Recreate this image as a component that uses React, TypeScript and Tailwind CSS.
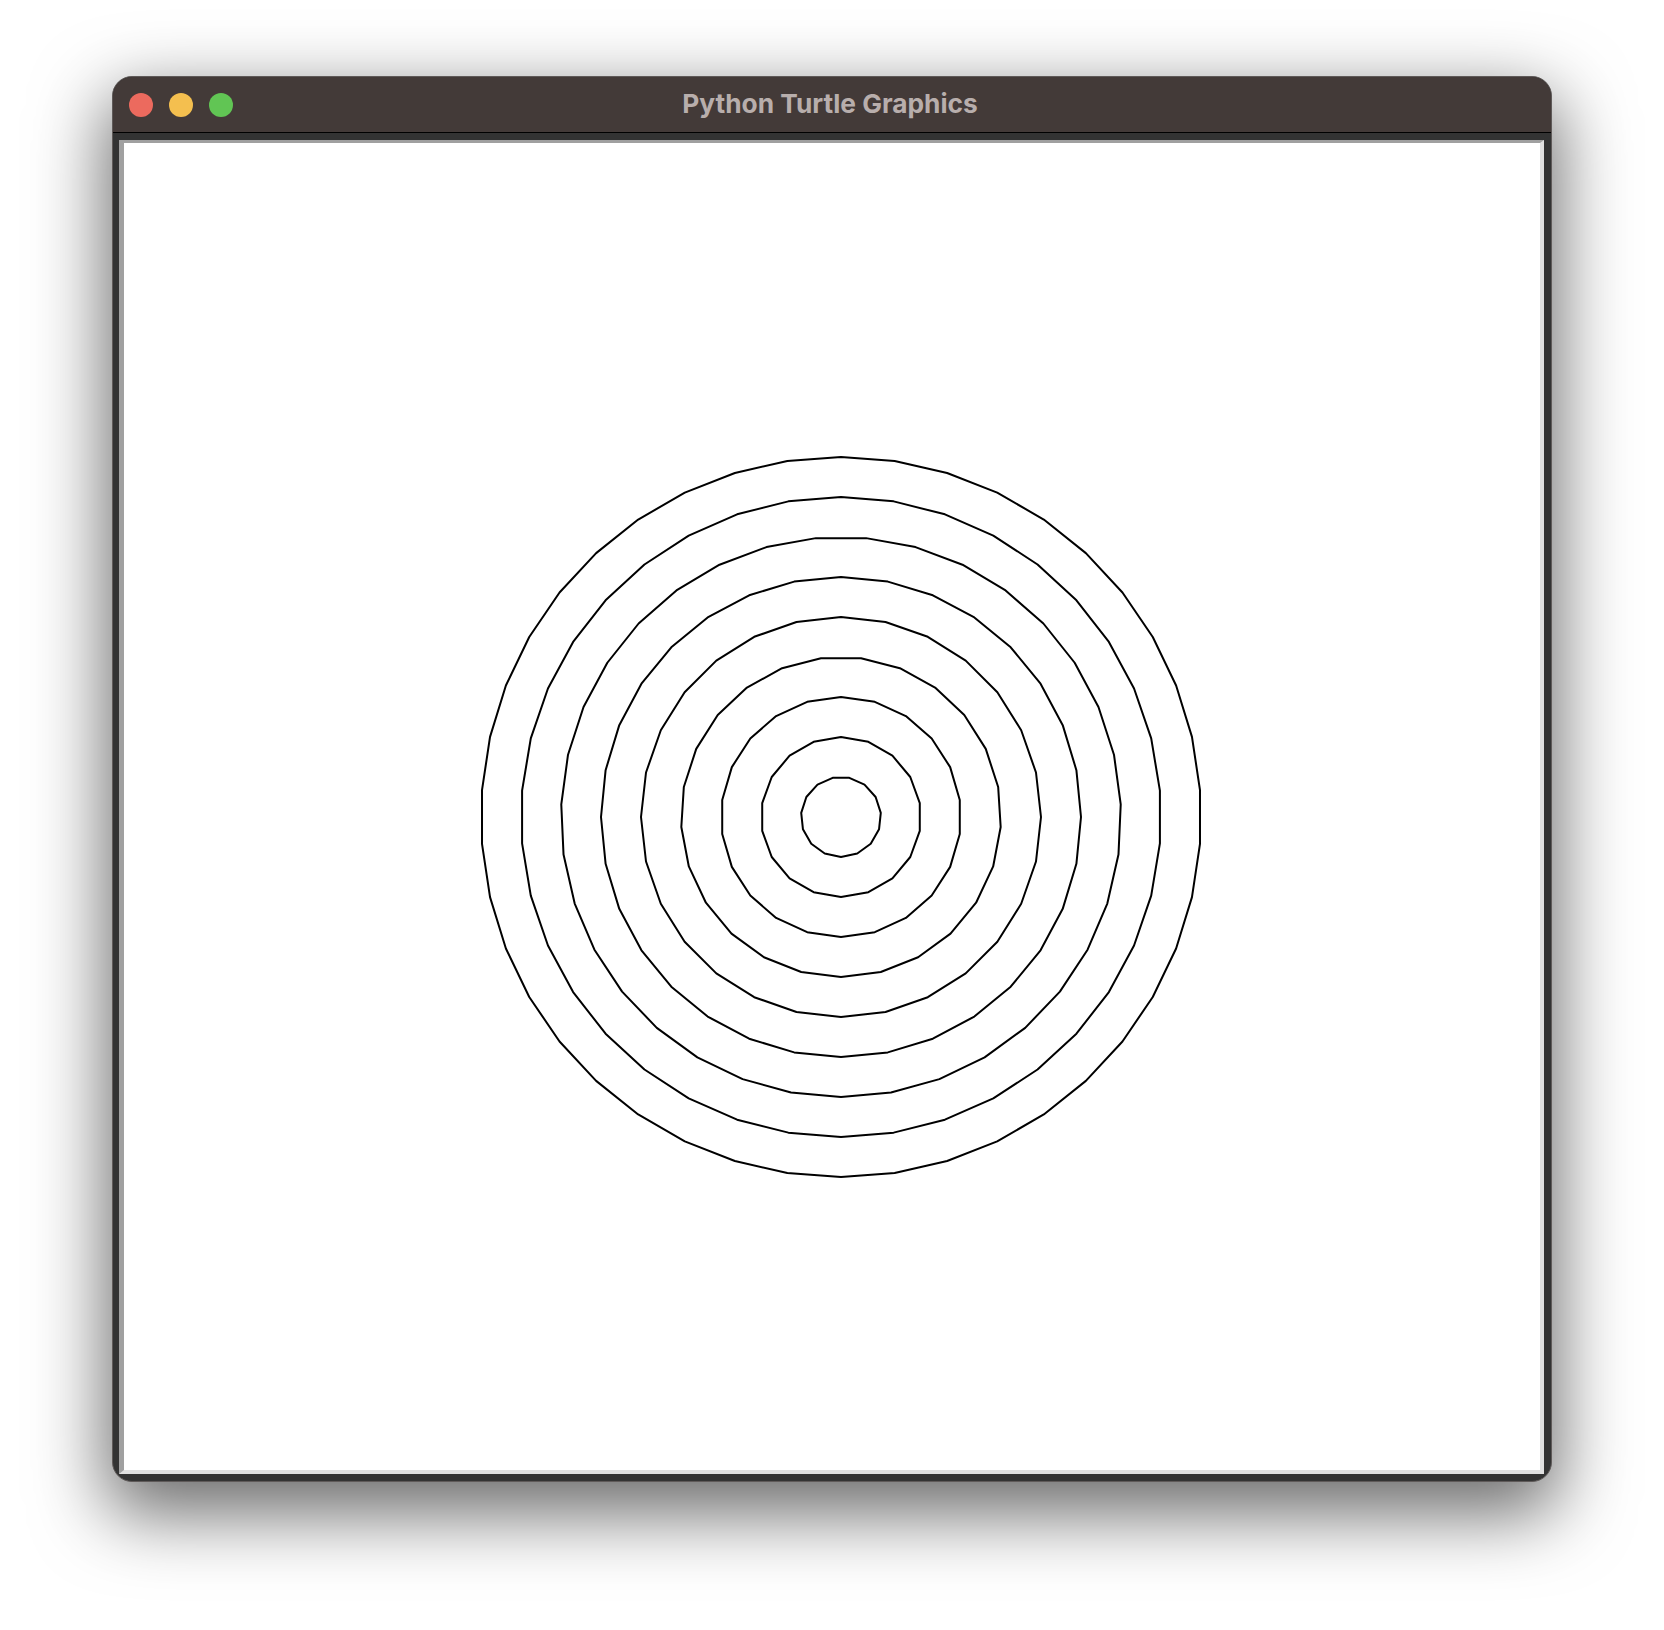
const CX = 717;
const CY = 674;

// turtle.circle() draws a polygon: steps = 1 + int(min(11 + r/6, 59))
function ringPoints(r: number) {
  const ru = r / 2;
  const steps = 1 + Math.floor(Math.min(11 + ru / 6, 59));
  const pts: string[] = [];
  for (let k = 0; k < steps; k++) {
    const a = ((-90 + (k * 360) / steps) * Math.PI) / 180;
    pts.push(`${(CX + r * Math.cos(a)).toFixed(2)},${(CY - r * Math.sin(a)).toFixed(2)}`);
  }
  return pts.join(' ');
}

const radii = [40, 80, 120, 160, 200, 240, 280, 320, 360];

function TrafficLights() {
  return (
    <div className="flex items-center gap-4 pl-4">
      <span className="block h-6 w-6 rounded-full bg-[#ec6a5e]" />
      <span className="block h-6 w-6 rounded-full bg-[#f4bf4f]" />
      <span className="block h-6 w-6 rounded-full bg-[#61c554]" />
    </div>
  );
}

export default function App() {
  return (
    <div className="w-[1664px] h-[1630px] bg-white pl-[112px] pt-[76px]">
      <div className="w-[1440px] h-[1406px] flex flex-col rounded-[20px] overflow-hidden border border-[#5f5a59] bg-[#333333] shadow-[0_26px_72px_6px_rgba(0,0,0,0.58)]">
        <div className="h-[56px] shrink-0 grid grid-cols-[1fr_auto_1fr] items-center bg-[#433a38] border-b border-black">
          <TrafficLights />
          <div
            className="text-[26.3px] font-bold text-[#b8aeac] pr-1 leading-none"
            style={{ fontFamily: 'Inter, "Noto Sans", sans-serif' }}
          >
            Python Turtle Graphics
          </div>
          <div />
        </div>
        <div className="flex-1 pl-[6px] pt-[7px] pr-[7px] pb-[7px]">
          <div className="w-[1425px] h-[1334px] bg-white border-l-[5px] border-t-[3px] border-r-[4px] border-b-[4px] border-l-[#a0a0a0] border-t-[#a0a0a0] border-r-[#e0e0e0] border-b-[#e0e0e0]">
            <svg width="1416" height="1327" viewBox="0 0 1416 1327" className="block">
              {radii.map((r) => (
                <polygon
                  key={r}
                  points={ringPoints(r)}
                  fill="none"
                  stroke="#000"
                  strokeWidth={2}
                  strokeLinejoin="round"
                />
              ))}
            </svg>
          </div>
        </div>
      </div>
    </div>
  );
}
